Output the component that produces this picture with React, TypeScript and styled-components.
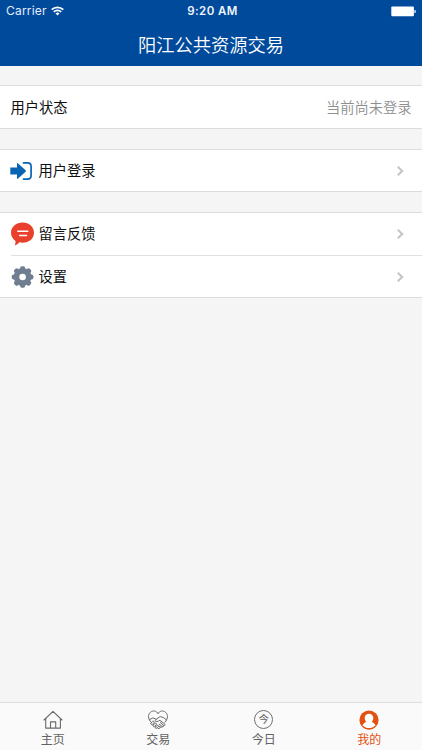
import React from "react";
import styled, { createGlobalStyle } from "styled-components";

const GlobalStyle = createGlobalStyle`
  * { box-sizing: border-box; }
  body {
    margin: 0;
    background: #f5f5f5;
    font-family: Inter, "Noto Sans CJK SC", sans-serif;
  }
`;

const Screen = styled.div`
  height: 750px;
  display: flex;
  flex-direction: column;
  background: #f5f5f5;
  overflow: hidden;
`;

const Header = styled.header`
  height: 66px;
  flex: none;
  background: #004a9c;
  color: #fff;
`;

const StatusBar = styled.div`
  height: 22px;
  padding: 0 6px;
  display: grid;
  grid-template-columns: 1fr auto 1fr;
  align-items: center;
`;

const Carrier = styled.div`
  display: flex;
  align-items: center;
  gap: 4px;
  font-size: 12px;
  line-height: 22px;
  letter-spacing: 0.2px;
  color: #e4edf8;
`;

const Clock = styled.div`
  padding-left: 3px;
  font-size: 11.5px;
  font-weight: 600;
  line-height: 22px;
  letter-spacing: 0.4px;
  color: #eef4fb;
`;

const BatterySlot = styled.div`
  display: flex;
  justify-content: flex-end;
`;

const Title = styled.h1`
  margin: 0;
  height: 44px;
  font-family: "Noto Sans CJK SC", sans-serif;
  font-size: 18.25px;
  font-weight: 350;
  line-height: 45px;
  text-align: center;
`;

const Content = styled.main`
  flex: 1;
  padding-top: 19px;
  display: flex;
  flex-direction: column;
  gap: 20px;
`;

const Group = styled.section`
  background: #fff;
  border: solid #dcdcde;
  border-width: 1px 0;
`;

const Row = styled.div<{ $compact?: boolean }>`
  height: ${(p) => (p.$compact ? 41 : 42)}px;
  padding: 0 10.5px 0 10px;
  display: flex;
  align-items: center;
  color: #111;
  font-size: 14.25px;
  line-height: ${(p) => (p.$compact ? 41 : 42)}px;
`;

const StatusRow = styled(Row)`
  padding-top: 2px;
  padding-left: 10.5px;
`;

const Divider = styled.div`
  height: 1px;
  margin-left: 11px;
  background: #e0e0e2;
`;

const IconSlot = styled.span`
  width: 28.5px;
  display: flex;
`;

const Label = styled.span`
  flex: 1;
`;

const Value = styled.span`
  color: #8e8e8e;
  font-weight: 350;
`;

const ArrowSlot = styled.span`
  display: flex;
  margin-right: 8px;
`;

const TabBar = styled.nav`
  height: 48px;
  flex: none;
  display: grid;
  grid-template-columns: repeat(4, 1fr);
  background: #fafafa;
  border-top: 1px solid #dedede;
`;

const Tab = styled.div<{ $active?: boolean }>`
  display: flex;
  flex-direction: column;
  align-items: center;
  padding-top: 6px;
  color: ${(p) => (p.$active ? "#e3500f" : "#636363")};
  font-size: 12px;
  line-height: 20px;
`;

const Wifi = () => (
  <svg width="13" height="10" viewBox="0 0 13 10" fill="none" stroke="#fff" strokeWidth="1.7">
    <path d="M.7 3.7a8.2 8.2 0 0 1 11.6 0M2.8 5.9a5.2 5.2 0 0 1 7.4 0" />
    <path d="M4.5 7.4a2.8 2.8 0 0 1 4 0L6.5 9.5z" fill="#fff" stroke="none" />
  </svg>
);

const Battery = () => (
  <svg width="25" height="11" viewBox="0 0 25 11">
    <rect x=".3" y=".5" width="22.6" height="9.8" rx="1" fill="#fff" />
    <path d="M23.4 3.8q1.6.2 1.6 1.7t-1.6 1.7z" fill="#dce8f6" />
  </svg>
);

const LoginIcon = () => (
  <svg width="22" height="20" viewBox="0 0 22 20">
    <path d="M.3 6.400H7V2.600q.3-.9 1.100-.2l7.500 6.900q.6.700 0 1.400L8.100 17.600q-.8.600-1.100-.2v-3.800H.3z" fill="#0965b1" />
    <path d="M13.500 1.900h4q3.600 0 3.600 3.600v9q0 3.600-3.600 3.600h-4" fill="none" stroke="#0965b1" strokeWidth="1.700" strokeLinecap="round" />
  </svg>
);

const MessageIcon = () => (
  <svg width="25" height="24" viewBox="0 0 25 24">
    <path d="M12.700 .500C19.300 .500 24 4.900 24 10.700s-4.800 10-11.400 10q-1.700 0-3.300-.4Q8 22.800 4.800 23.500q1-2.300.7-4.600Q1 15.900 1 10.700C1 4.900 6 .500 12.700 .500z" fill="#e9402e" />
    <path d="M7.800 9.200h10M9.600 13.400h6.900" stroke="#fff" strokeWidth="1.500" strokeLinecap="round" />
  </svg>
);

const GearIcon = () => (
  <svg width="25" height="24" viewBox="-.6 0 25 24">
    <g fill="#6f7e90">
      {[0, 45, 90, 135, 180, 225, 270, 315].map((angle) => (
        <rect key={angle} x="9.500" y="1.200" width="5" height="6" rx="1.800" transform={`rotate(${angle} 12 12)`} />
      ))}
    </g>
    <circle cx="12" cy="12" r="6.100" fill="none" stroke="#6f7e90" strokeWidth="5.600" />
  </svg>
);

const Arrow = () => (
  <svg width="8" height="12" viewBox="0 0 8 12" fill="none" stroke="#c5c5ca" strokeWidth="2.100">
    <path d="M1.800 1.700 6.200 6l-4.400 4.300" />
  </svg>
);

const HomeIcon = () => (
  <svg width="20" height="20" viewBox="0 0 20 20" fill="none" stroke="#6a6a6a" strokeWidth="1.100">
    <path d="M1 10 10 1.300l9 8.700M2.700 8.800v9.300h14.700V8.800M7.500 18.100v-6.200h5.200v6.200" strokeLinejoin="round" strokeLinecap="round" />
  </svg>
);

const HandshakeIcon = () => (
  <svg width="20" height="20" viewBox="0 0 20 20" fill="none" stroke="#6a6a6a" strokeWidth="1" strokeLinejoin="round" strokeLinecap="round">
    <path d="M3 12.200C-.2 8.700-.2 4.400 2.300 2.400 5-.1 8.700.9 10 3.800c1.300-2.900 5-3.900 7.700-1.400 2.500 2 2.500 6.300-.7 9.800" />
    <path d="M1.500 9.700 5 7.800l3 1.500M18.500 10 15.700 7.700 12.200 6.500 7.700 9.600q-1 1.200.1 1.900 1.200.6 2.500-.4l1.600-.8 4.600 3.400q.9.900 0 1.700-.8.500-1.600-.2M12.300 12.500l3.300 2.700q.3 1.400-1 1.600l-3.300-2.600M11 16l1.500 1.100q1.300.5 2-.4M10 18.500q1.500 1.200 2.400-1.300" />
    <path d="m3.100 12.900 1.500-1.500q1-.6 1.500.2.400.7-.2 1.300l-1.600 1.500q-1 .5-1.400-.3-.3-.6.200-1.200zM5.200 15l1.700-1.600q1-.5 1.500.3.300.6-.3 1.200L6.400 16.400q-.9.500-1.400-.300-.3-.6.200-1.100zM7.500 16.900l1.400-1.400q1-.5 1.500.3.200.6-.3 1.200l-1.200 1.200q-1 .5-1.500-.200-.3-.6.100-1.100z" />
  </svg>
);

const TodayBadge = styled.span`
  width: 19px;
  height: 19px;
  border: 1px solid #707070;
  border-radius: 50%;
  font-size: 10.5px;
  line-height: 17px;
  text-align: center;
`;

const TabIcon = styled.span`
  height: 21px;
  display: flex;
  align-items: center;
`;

const ProfileIcon = () => (
  <svg width="20" height="20" viewBox="0 0 20 20">
    <circle cx="10" cy="10" r="9.600" fill="#e3500f" />
    <path d="M10 3.800c2.500 0 4.300 1.700 4.300 4.300 0 1.700-.7 3-1.700 3.900 2.200.6 3.500 1.900 3.900 4.100Q13.500 18.400 10 18.400t-6.500-2.300c.4-2.200 1.700-3.500 3.900-4.100-1-.9-1.700-2.200-1.700-3.900C5.700 5.500 7.500 3.800 10 3.800z" fill="#fff" />
    <path d="M3.800 16.300Q6.300 18.900 10 18.900t6.200-2.600" fill="none" stroke="#e3500f" strokeWidth="1.200" />
  </svg>
);

export default function App() {
  return (
    <>
      <GlobalStyle />
      <Screen>
        <Header>
          <StatusBar>
            <Carrier>Carrier<Wifi /></Carrier>
            <Clock>9:20 AM</Clock>
            <BatterySlot><Battery /></BatterySlot>
          </StatusBar>
          <Title>阳江公共资源交易</Title>
        </Header>
        <Content>
          <Group>
            <StatusRow><Label>用户状态</Label><Value>当前尚未登录</Value></StatusRow>
          </Group>
          <Group>
            <Row $compact><IconSlot><LoginIcon /></IconSlot><Label>用户登录</Label><ArrowSlot><Arrow /></ArrowSlot></Row>
          </Group>
          <Group>
            <Row><IconSlot><MessageIcon /></IconSlot><Label>留言反馈</Label><ArrowSlot><Arrow /></ArrowSlot></Row>
            <Divider />
            <Row $compact><IconSlot><GearIcon /></IconSlot><Label>设置</Label><ArrowSlot><Arrow /></ArrowSlot></Row>
          </Group>
        </Content>
        <TabBar>
          <Tab><TabIcon><HomeIcon /></TabIcon>主页</Tab>
          <Tab><TabIcon><HandshakeIcon /></TabIcon>交易</Tab>
          <Tab><TabIcon><TodayBadge>今</TodayBadge></TabIcon>今日</Tab>
          <Tab $active><TabIcon><ProfileIcon /></TabIcon>我的</Tab>
        </TabBar>
      </Screen>
    </>
  );
}
